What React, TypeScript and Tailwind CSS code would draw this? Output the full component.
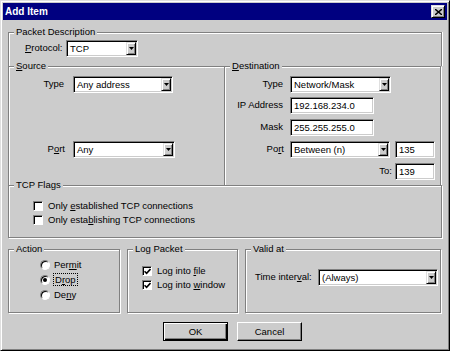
import React from "react";

function Group({
  label,
  className,
  children,
}: {
  label: React.ReactNode;
  className: string;
  children?: React.ReactNode;
}) {
  return (
    <div
      className={`relative border border-[#808080] shadow-[inset_1px_1px_0_#fff,1px_1px_0_#fff] ${className}`}
    >
      <span className="absolute top-[-7px] left-[5px] px-[2px] bg-[#cccccc] leading-[12px] whitespace-nowrap">
        {label}
      </span>
      {children}
    </div>
  );
}

function Field({ className, children }: { className: string; children?: React.ReactNode }) {
  return (
    <div
      className={`h-[17px] flex items-center bg-white border border-t-[#808080] border-l-[#808080] border-r-white border-b-white shadow-[inset_1px_1px_0_#000,inset_-1px_-1px_0_#cccccc] ${className}`}
    >
      {children}
    </div>
  );
}

function Combo({ className, value }: { className: string; value: string }) {
  return (
    <Field className={className}>
      <span className="flex-1 pl-[3px] leading-[12px] whitespace-nowrap overflow-hidden">{value}</span>
      <span className="m-[1px] h-[13px] w-[10px] flex items-center justify-center bg-[#cccccc] border border-t-[#dfdfdf] border-l-[#dfdfdf] border-r-black border-b-black shadow-[inset_1px_1px_0_#fff,inset_-1px_-1px_0_#808080]">
        <svg width="5" height="3" viewBox="0 0 5 3">
          <path d="M0 0h5l-2.5 3z" fill="#000" />
        </svg>
      </span>
    </Field>
  );
}

function Text({ className, value }: { className: string; value: string }) {
  return (
    <Field className={className}>
      <span className="pl-[3px] leading-[12px] whitespace-nowrap">{value}</span>
    </Field>
  );
}

function Check({ checked, children }: { checked?: boolean; children: React.ReactNode }) {
  return (
    <div className="flex items-center h-[14px]">
      <span className="w-[10px] h-[10px] flex items-center justify-center bg-white border border-t-[#808080] border-l-[#808080] border-r-white border-b-white shadow-[inset_1px_1px_0_#000]">
        {checked && (
          <svg width="7" height="7" viewBox="0 0 7 7">
            <path d="M0.5 3.2 L2.6 5.4 L6.5 1" stroke="#000" strokeWidth="1.6" fill="none" />
          </svg>
        )}
      </span>
      <span className="ml-[5px] whitespace-nowrap leading-[12px]">{children}</span>
    </div>
  );
}

function Radio({ checked, children }: { checked?: boolean; children: React.ReactNode }) {
  return (
    <div className="flex items-center h-[15px]">
      <span className="w-[10px] h-[10px] rounded-full flex items-center justify-center bg-white border border-t-[#808080] border-l-[#808080] border-r-white border-b-white shadow-[inset_1px_1px_0_#000]">
        {checked && <span className="w-[4px] h-[4px] rounded-full bg-black" />}
      </span>
      <span className="ml-[4px] whitespace-nowrap leading-[12px]">{children}</span>
    </div>
  );
}

export default function App() {
  return (
    <div className="w-[450px] h-[351px] p-[2px] bg-[#cccccc] text-black text-[9.5px] font-['Liberation_Sans',Arial,sans-serif] border border-t-[#dfdfdf] border-l-[#dfdfdf] border-r-black border-b-black shadow-[inset_1px_1px_0_#fff,inset_-1px_-1px_0_#808080] overflow-hidden">
      {/* title bar */}
      <div className="h-[17px] bg-[#000080] flex justify-between pl-[2px] pr-[2px]">
        <span className="text-white font-bold text-[10px] leading-[17px]">Add Item</span>
        <button className="mt-[2px] w-[14px] h-[13px] flex items-center justify-center bg-[#cccccc] border border-t-[#dfdfdf] border-l-[#dfdfdf] border-r-black border-b-black shadow-[inset_1px_1px_0_#fff,inset_-1px_-1px_0_#808080]">
          <svg width="7" height="6" viewBox="0 0 7 6">
            <path d="M0 0L7 6M7 0L0 6" stroke="#000" strokeWidth="1.4" />
          </svg>
        </button>
      </div>

      <div className="flex flex-col px-[5px]">
        {/* packet description top */}
        <div className="mt-[12px] h-[34px] relative border-t border-l border-r border-[#808080] shadow-[inset_1px_1px_0_#fff,1px_0_0_#fff] pt-[7px] pl-[16px]">
          <span className="absolute top-[-7px] left-[5px] px-[2px] bg-[#cccccc] leading-[12px]">
            Packet Description
          </span>
          <div className="flex items-center">
            <span className="w-[41px]">
              <u>P</u>rotocol:
            </span>
            <Combo className="w-[72px]" value="TCP" />
          </div>
        </div>

        <div className="flex">
          <Group
            label={
              <>
                <u>S</u>ource
              </>
            }
            className="w-[217px] h-[120px] pt-[9px]"
          >
            <div className="flex items-center">
              <span className="w-[55px] text-right">Type</span>
              <Combo className="ml-[9px] w-[100px]" value="Any address" />
            </div>
            <div className="flex items-center mt-[48px]">
              <span className="w-[56px] text-right">
                P<u>o</u>rt
              </span>
              <Combo className="ml-[8px] w-[102px]" value="Any" />
            </div>
          </Group>

          <Group
            label={
              <>
                <u>D</u>estination
              </>
            }
            className="-ml-px w-[217px] h-[120px] pt-[9px]"
          >
            <div className="flex items-center">
              <span className="w-[58px] text-right">Type</span>
              <Combo className="ml-[7px] w-[101px]" value="Network/Mask" />
            </div>
            <div className="flex items-center mt-[4px]">
              <span className="w-[58px] text-right">IP Address</span>
              <Text className="ml-[7px] w-[84px]" value="192.168.234.0" />
            </div>
            <div className="flex items-center mt-[5px]">
              <span className="w-[58px] text-right">Mask</span>
              <Text className="ml-[7px] w-[84px]" value="255.255.255.0" />
            </div>
            <div className="flex items-center mt-[5px]">
              <span className="w-[59px] text-right">
                Po<u>r</u>t
              </span>
              <Combo className="ml-[6px] w-[100px]" value="Between (n)" />
              <Text className="ml-[5px] w-[40px]" value="135" />
            </div>
            <div className="flex items-center justify-end mt-[5px] pr-[5px]">
              <span>To:</span>
              <Text className="ml-[3px] w-[40px]" value="139" />
            </div>
          </Group>
        </div>

        <Group label="TCP Flags" className="-mt-px h-[53px] pt-[13px] pl-[24px]">
          <Check>
            Only <u>e</u>stablished TCP connections
          </Check>
          <Check>
            Only esta<u>b</u>lishing TCP connections
          </Check>
        </Group>

        <div className="flex mt-[11px]">
          <Group label="Action" className="w-[112px] h-[64px] pt-[7px] pl-[31px]">
            <Radio>
              Per<u>m</u>it
            </Radio>
            <Radio checked>
              <span className="outline outline-1 outline-dotted outline-black px-[1px]">
                D<u>r</u>op
              </span>
            </Radio>
            <Radio>
              De<u>n</u>y
            </Radio>
          </Group>

          <Group label="Log Packet" className="ml-[7px] w-[111px] h-[64px] pt-[14px] pl-[14px]">
            <Check checked>
              Log into <u>f</u>ile
            </Check>
            <Check checked>
              Log into <u>w</u>indow
            </Check>
          </Group>

          <Group label="Valid at" className="ml-[7px] w-[196px] h-[64px] pt-[19px] pl-[9px]">
            <div className="flex items-center">
              <span className="w-[63px] whitespace-nowrap">
                Time inter<u>v</u>al:
              </span>
              <Combo className="w-[120px]" value="(Always)" />
            </div>
          </Group>
        </div>

        <div className="flex mt-[9px] ml-[155px]">
          <button className="w-[65px] h-[19px] border border-black bg-[#cccccc] shadow-[inset_1px_1px_0_#fff,inset_-1px_-1px_0_#000,inset_-2px_-2px_0_#808080] leading-[12px]">
            OK
          </button>
          <button className="ml-[9px] w-[65px] h-[19px] bg-[#cccccc] border border-t-white border-l-white border-r-black border-b-black shadow-[inset_-1px_-1px_0_#808080] leading-[12px]">
            Cancel
          </button>
        </div>
      </div>
    </div>
  );
}
